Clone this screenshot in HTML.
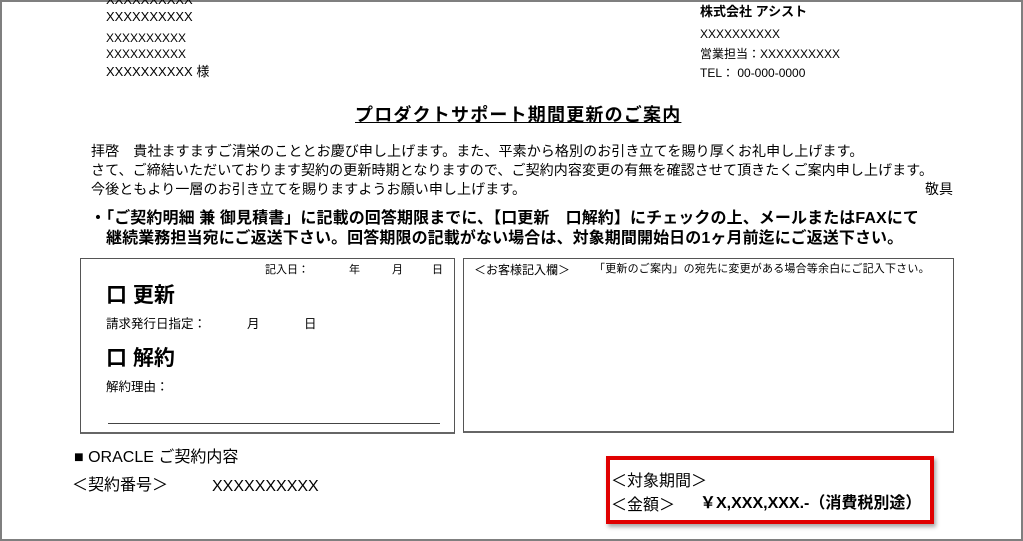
<!DOCTYPE html>
<html><head><meta charset="utf-8"><style>
*{margin:0;padding:0;box-sizing:border-box}
body{width:1023px;height:541px;overflow:hidden;background:#fff;font-family:"Liberation Sans","Noto Sans CJK JP",sans-serif;color:#000;position:relative}
.frame{position:absolute;left:0;top:0;width:1023px;height:541px;border:2px solid #7f7f7f}
.t{position:absolute;white-space:nowrap;line-height:1}
.box{position:absolute;border:1px solid #555;border-bottom:2px solid #666}
</style></head><body>
<div class="frame"></div>
<div class="t" style="left:106px;top:-7px;font-size:13px">XXXXXXXXXX</div>
<div class="t" style="left:106px;top:10px;font-size:13px">XXXXXXXXXX</div>
<div class="t" style="left:106px;top:32px;font-size:12px">XXXXXXXXXX</div>
<div class="t" style="left:106px;top:48px;font-size:12px">XXXXXXXXXX</div>
<div class="t" style="left:106px;top:65px;font-size:13px">XXXXXXXXXX 様</div>

<div class="t" style="left:700px;top:5px;font-size:13px;font-weight:bold">株式会社 アシスト</div>
<div class="t" style="left:700px;top:28px;font-size:12px">XXXXXXXXXX</div>
<div class="t" style="left:700px;top:48px;font-size:12px">営業担当：XXXXXXXXXX</div>
<div class="t" style="left:700px;top:67px;font-size:12px">TEL： 00-000-0000</div>

<div class="t" style="left:355px;top:106px;font-size:18px;font-weight:bold;text-decoration:underline;width:325px;text-align:center;letter-spacing:1.2px">プロダクトサポート期間更新のご案内</div>

<div class="t" style="left:91px;top:144px;font-size:14px;letter-spacing:0.1px">拝啓　貴社ますますご清栄のこととお慶び申し上げます。また、平素から格別のお引き立てを賜り厚くお礼申し上げます。</div>
<div class="t" style="left:91px;top:163px;font-size:14px;letter-spacing:0.1px">さて、ご締結いただいております契約の更新時期となりますので、ご契約内容変更の有無を確認させて頂きたくご案内申し上げます。</div>
<div class="t" style="left:91px;top:182px;font-size:14px;letter-spacing:0.1px">今後ともより一層のお引き立てを賜りますようお願い申し上げます。</div>
<div class="t" style="left:925px;top:182px;font-size:14px">敬具</div>

<div class="t" style="left:90px;top:211px;font-size:16px;font-weight:bold;letter-spacing:0.1px">・「ご契約明細 兼 御見積書」に記載の回答期限までに、【口更新　口解約】にチェックの上、メールまたはFAXにて</div>
<div class="t" style="left:106px;top:231px;font-size:16px;font-weight:bold;letter-spacing:0.1px">継続業務担当宛にご返送下さい。回答期限の記載がない場合は、対象期間開始日の1ヶ月前迄にご返送下さい。</div>

<div class="box" style="left:80px;top:258px;width:375px;height:176px"></div>
<div class="box" style="left:463px;top:258px;width:491px;height:175px"></div>

<div class="t" style="left:265px;top:265px;font-size:11px">記入日：</div>
<div class="t" style="left:349px;top:265px;font-size:11px">年</div>
<div class="t" style="left:392px;top:265px;font-size:11px">月</div>
<div class="t" style="left:432px;top:265px;font-size:11px">日</div>
<div class="t" style="left:106px;top:285px;font-size:21px;font-weight:bold">口 更新</div>
<div class="t" style="left:106px;top:318px;font-size:12.5px">請求発行日指定：</div>
<div class="t" style="left:247px;top:318px;font-size:12.5px">月</div>
<div class="t" style="left:304px;top:318px;font-size:12.5px">日</div>
<div class="t" style="left:106px;top:348px;font-size:21px;font-weight:bold">口 解約</div>
<div class="t" style="left:106px;top:381px;font-size:12.5px">解約理由：</div>
<div style="position:absolute;left:108px;top:423px;width:332px;height:1px;background:#444"></div>

<div class="t" style="left:474px;top:264px;font-size:12px">＜お客様記入欄＞</div>
<div class="t" style="left:594px;top:264px;font-size:11px;letter-spacing:0.2px">「更新のご案内」の宛先に変更がある場合等余白にご記入下さい。</div>

<div class="t" style="left:74px;top:450px;font-size:16px">■ ORACLE ご契約内容</div>
<div class="t" style="left:72px;top:478px;font-size:16px">＜契約番号＞</div>
<div class="t" style="left:212px;top:479px;font-size:16px">XXXXXXXXXX</div>

<div style="position:absolute;left:606px;top:456px;width:328px;height:68px;border:4px solid #e00000;box-shadow:2px 3px 4px rgba(0,0,0,.35)"></div>
<div class="t" style="left:611px;top:474px;font-size:16px">＜対象期間＞</div>
<div class="t" style="left:611px;top:498px;font-size:16px">＜金額＞</div>
<div class="t" style="left:700px;top:496px;font-size:16px;font-weight:bold">￥X,XXX,XXX.-（消費税別途）</div>
</body></html>
